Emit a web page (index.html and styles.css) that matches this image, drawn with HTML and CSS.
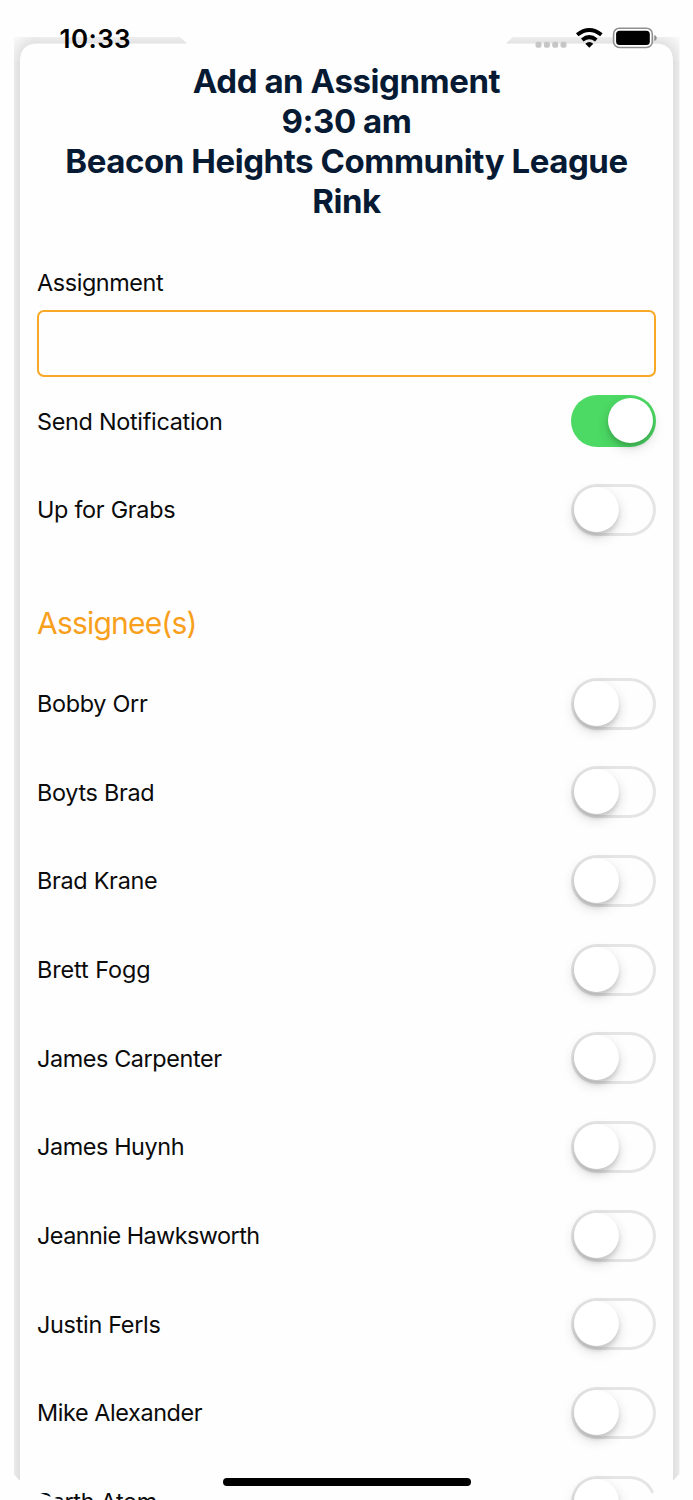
FILE: index.html
```html
<!DOCTYPE html>
<html lang="en">
<head>
<meta charset="utf-8">
<title>Add an Assignment</title>
<link rel="stylesheet" href="styles.css">
</head>
<body>
<div class="screen">
  <svg class="backdrop" width="693" height="1500" viewBox="0 0 693 1500" aria-hidden="true">
    <defs>
      <linearGradient id="top" x1="0" y1="0" x2="0" y2="1"><stop offset="0" stop-color="#eeeeee"/><stop offset="1" stop-color="#e2e2e2"/></linearGradient>
      <linearGradient id="left"><stop offset="0" stop-color="#eaeaea"/><stop offset="1" stop-color="#dfdfdf"/></linearGradient>
      <linearGradient id="right"><stop offset="0" stop-color="#dfdfdf"/><stop offset="1" stop-color="#eaeaea"/></linearGradient>
      <radialGradient id="cornerL" gradientUnits="userSpaceOnUse" cx="38" cy="61" r="34"><stop offset=".51" stop-color="#e1e1e1"/><stop offset=".7" stop-color="#ececec"/><stop offset="1" stop-color="#fafafa"/></radialGradient>
      <radialGradient id="cornerR" gradientUnits="userSpaceOnUse" cx="655" cy="61" r="34"><stop offset=".51" stop-color="#e1e1e1"/><stop offset=".7" stop-color="#ececec"/><stop offset="1" stop-color="#fafafa"/></radialGradient>
    </defs>
    <path fill="url(#left)" d="M14 61H20V1481L14 1475Z"/>
    <path fill="url(#right)" d="M673 61H679.500V1474L673 1481Z"/>
    <path fill="url(#top)" d="M38 37H180L187 43.500H38ZM513 37H655V43.500H506Z"/>
    <path fill="url(#cornerL)" d="M14 37H38V43.500Q20 43.500 20 61H14Z"/>
    <path fill="url(#cornerR)" d="M679.500 37H655V43.500Q673 43.500 673 61H679.500Z"/>
  </svg>
  <header class="status">
    <time class="clock">10:33</time>
    <svg class="indicators" width="124" height="26" viewBox="0 0 124 26" aria-hidden="true">
      <g fill="#c6c6c6"><rect x="1.500" y="17.700" width="6" height="6" rx="2"/><rect x="9.900" y="17.700" width="6" height="6" rx="2"/><rect x="18.200" y="17.700" width="6" height="6" rx="2"/><rect x="26.500" y="17.700" width="6" height="6" rx="2"/></g>
      <g fill="none" stroke="#000" stroke-width="4"><path d="M43.200 10.800Q55.300 1.200 67.400 10.800"/><path d="M48.300 16Q55.300 10.200 62.300 16"/></g>
      <path d="M51.300 19.700Q55.300 16.200 59.300 19.700L55.300 23.800Z"/>
      <rect x="79.600" y="4.200" width="38.700" height="19.300" rx="5.800" fill="#fff" stroke="#8f8f8f" stroke-width="1.600"/>
      <rect x="82.100" y="6.700" width="33.700" height="14.300" rx="3.500"/>
      <path fill="#8f8f8f" d="M120.300 11C123.500 12.200 123.500 15.800 120.300 17Z"/>
    </svg>
  </header>
  <main class="sheet">
    <h1 class="title">Add an Assignment<br>9:30 am<br><span class="venue">Beacon Heights Community League</span><br>Rink</h1>
    <label class="field"><span class="label snug">Assignment</span><input class="input" type="text"></label>
    <div class="rows">
      <label class="row"><span class="label">Send Notification</span><input class="switch" type="checkbox" checked></label>
      <label class="row"><span class="label">Up for Grabs</span><input class="switch" type="checkbox"></label>
    </div>
    <h2 class="section">Assignee(s)</h2>
    <div class="rows">
      <label class="row"><span class="label">Bobby Orr</span><input class="switch" type="checkbox"></label>
      <label class="row"><span class="label">Boyts Brad</span><input class="switch" type="checkbox"></label>
      <label class="row"><span class="label">Brad Krane</span><input class="switch" type="checkbox"></label>
      <label class="row"><span class="label loose">Brett Fogg</span><input class="switch" type="checkbox"></label>
      <label class="row"><span class="label snug">James Carpenter</span><input class="switch" type="checkbox"></label>
      <label class="row"><span class="label snug">James Huynh</span><input class="switch" type="checkbox"></label>
      <label class="row"><span class="label tight">Jeannie Hawksworth</span><input class="switch" type="checkbox"></label>
      <label class="row"><span class="label">Justin Ferls</span><input class="switch" type="checkbox"></label>
      <label class="row"><span class="label snug">Mike Alexander</span><input class="switch" type="checkbox"></label>
      <label class="row"><span class="label">Parth Atom</span><input class="switch" type="checkbox"></label>
    </div>
  </main>
  <svg class="corners" width="693" height="40" viewBox="0 0 693 40" aria-hidden="true">
    <path fill="#fefefe" d="M0 0L20 21Q34 33 62 40H0ZM693 0L673 21Q659 33 631 40H693Z"/>
  </svg>
  <div class="home"></div>
</div>
</body>
</html>
```
FILE: styles.css
```css
* { box-sizing: border-box; }
body { margin: 0; background: #fefefe; color: #0b0b0b; font-family: Inter, "Liberation Sans", sans-serif; }
.screen { position: relative; width: 693px; height: 1500px; overflow: hidden; }
.backdrop { position: absolute; inset: 0; }
.status { position: relative; display: flex; justify-content: space-between; align-items: flex-start; height: 61px; padding: 24px 35px 0 59.5px; }
.clock { font-size: 26px; line-height: 29px; font-weight: 600; letter-spacing: .4px; color: #000; }
.sheet { position: relative; padding: 0 37px; }
.title { margin: 0; font-size: 33px; line-height: 40px; font-weight: 700; letter-spacing: -.44px; text-align: center; color: #071a33; white-space: nowrap; }
.field { display: block; margin-top: 44px; }
.label { display: block; padding-top: 1px; font-size: 23.4px; line-height: 34px; letter-spacing: -.29px; white-space: nowrap; }
.label.loose { letter-spacing: -.08px; }
.label.snug { letter-spacing: -.4px; }
.label.tight { letter-spacing: -.53px; }
.input { display: block; width: 619px; height: 67px; margin: 10px 0 0; border: 2px solid #f8a824; border-radius: 7px; background: transparent; outline: 0; }
.row { display: flex; justify-content: space-between; align-items: center; height: 88.67px; }
.switch { appearance: none; display: flex; width: 85px; height: 52px; margin: 0; padding: 3px 3px 4px; border-radius: 26px; box-shadow: inset 0 0 0 3px #e5e5e5; }
.switch::before { content: ""; width: 45px; height: 45px; border-radius: 50%; background: #fff; box-shadow: 0 5px 13px rgba(0,0,0,.15), 0 4px 4px rgba(0,0,0,.12); }
.switch:checked { justify-content: flex-end; background: #4cd964; box-shadow: none; }
.section { margin: 49px 0 15px; height: 41px; font-size: 30px; line-height: 41px; font-weight: 400; letter-spacing: -.8px; color: #f8a01c; }
.corners { position: absolute; left: 0; bottom: 0; }
.home { position: absolute; left: 222.500px; top: 1478px; width: 248px; height: 8px; border-radius: 4px; background: #000; }
```
